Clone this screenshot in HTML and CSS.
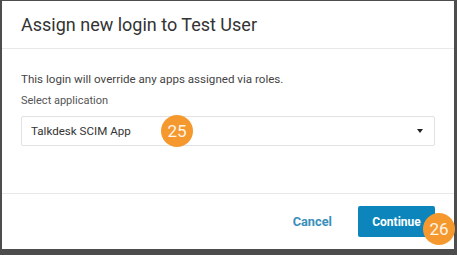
FILE: index.html
```html
<!DOCTYPE html>
<html lang="en">
<head>
    <meta charset="UTF-8">
    <meta name="viewport" content="width=device-width, initial-scale=1.0">
    <title>Assign new login</title>
    <link rel="stylesheet" href="styles.css">
</head>
<body>
    <div class="modal">
        <div class="modal-header">
            <h2>Assign new login to Test User</h2>
        </div>
        <div class="modal-body">
            <p class="note">This login will override any apps assigned via roles.</p>
            <label class="field-label" for="app">Select application</label>
            <div class="select-wrap">
                <div class="select" id="app">
                    <span>Talkdesk SCIM App</span>
                    <span class="caret"></span>
                </div>
                <span class="step step-25">25</span>
            </div>
        </div>
        <div class="modal-footer">
            <button type="button" class="btn-cancel">Cancel</button>
            <div class="btn-wrap">
                <button type="button" class="btn-continue">Continue</button>
                <span class="step step-26">26</span>
            </div>
        </div>
    </div>
</body>
</html>
```

FILE: styles.css
```css
* {
    box-sizing: border-box;
}
body {
    margin: 0;
    padding: 1px 3px 6px 2px;
    background-color: #4d4d4d;
    font-family: Roboto, "Liberation Sans", Arial, sans-serif;
    height: 255px;
}
.modal {
    width: 452px;
    height: 248px;
    background-color: #fff;
    display: flex;
    flex-direction: column;
}
.modal-header {
    height: 48px;
    padding: 0 19px;
    display: flex;
    align-items: center;
    border-bottom: 1px solid #e8e8e8;
}
.modal-header h2 {
    margin: 0;
    font-size: 18px;
    font-weight: 400;
    color: #333;
}
.modal-body {
    height: 145px;
    padding: 22px 19px 0;
    border-bottom: 1px solid #e8e8e8;
}
.note {
    margin: 0;
    font-size: 11.6px;
    line-height: 16px;
    color: #444;
}
.field-label {
    display: block;
    margin-top: 7px;
    font-size: 11px;
    line-height: 14px;
    color: #555;
}
.select-wrap {
    position: relative;
    margin-top: 8px;
}
.select {
    height: 30px;
    padding: 0 11px 0 9px;
    border: 1px solid #e2e2e2;
    border-radius: 2px;
    display: flex;
    align-items: center;
    justify-content: space-between;
    font-size: 11.6px;
    color: #333;
}
.caret {
    width: 0;
    height: 0;
    border-left: 3.5px solid transparent;
    border-right: 3.5px solid transparent;
    border-top: 4px solid #222;
}
.modal-footer {
    flex: 1;
    padding: 12px 19px 0;
    display: flex;
    justify-content: flex-end;
    align-items: flex-start;
    gap: 26px;
}
.btn-cancel {
    height: 31px;
    padding: 0;
    border: none;
    background: none;
    font-family: inherit;
    font-size: 12.8px;
    font-weight: 700;
    color: #3a8fba;
}
.btn-wrap {
    position: relative;
}
.btn-continue {
    width: 77px;
    height: 31px;
    border: none;
    border-radius: 2px;
    background-color: #0b85bc;
    color: #fff;
    font-family: inherit;
    font-size: 12px;
    font-weight: 700;
}
.step {
    position: absolute;
    width: 32px;
    height: 32px;
    border-radius: 50%;
    background-color: #f5992f;
    color: #fff5e8;
    font-size: 17px;
    display: flex;
    align-items: center;
    justify-content: center;
}
.step-25 {
    left: 140px;
    top: -1px;
}
.step-26 {
    left: 65px;
    top: 7px;
}
```
